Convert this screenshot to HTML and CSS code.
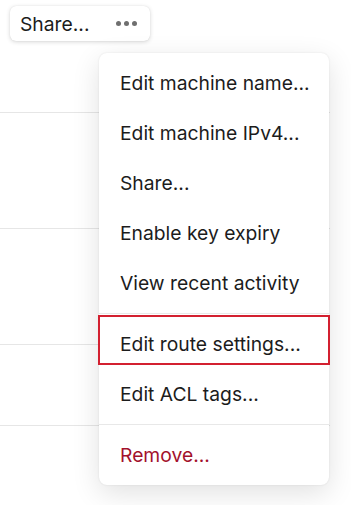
FILE: index.html
```html
<!DOCTYPE html>
<html>
<head>
<meta charset="utf-8">
<link rel="stylesheet" href="styles.css">
</head>
<body>
<div class="page">
  <div class="rows">
    <div class="row row-first">
      <div class="share-btn">
        <span class="share-label">Share...</span>
        <span class="dots"><i></i><i></i><i></i></span>
      </div>
    </div>
    <div class="row row-mid"></div>
    <div class="row row-mid"></div>
    <div class="row row-last"></div>
  </div>
  <div class="menu">
    <div class="item">Edit machine name...</div>
    <div class="item">Edit machine IPv4...</div>
    <div class="item">Share...</div>
    <div class="item">Enable key expiry</div>
    <div class="item">View recent activity</div>
    <div class="sep"></div>
    <div class="item item-marked">Edit route settings...</div>
    <div class="item">Edit ACL tags...</div>
    <div class="sep"></div>
    <div class="item item-danger">Remove...</div>
  </div>
</div>
</body>
</html>
```
FILE: styles.css
```css
html, body {
  margin: 0;
  padding: 0;
  background: #ffffff;
}
body {
  font-family: Inter, "Noto Sans", sans-serif;
  color: #1c1c1c;
  width: 351px;
  height: 505px;
  overflow: hidden;
}
.page {
  position: relative;
  width: 351px;
  height: 505px;
}
.rows {
  width: 330px;
  display: flex;
  flex-direction: column;
}
.row {
  border-bottom: 1px solid #e6e6e6;
  box-sizing: border-box;
}
.row-first {
  height: 113px;
  padding: 6px 0 0 10px;
}
.row-mid { height: 116px; }
.row-last { height: 81px; }
.share-btn {
  width: 140px;
  height: 35px;
  box-sizing: border-box;
  background: #fff;
  border-radius: 6px;
  box-shadow: 0 1px 4px rgba(0,0,0,0.16), 0 0 1px rgba(0,0,0,0.12);
  display: flex;
  align-items: center;
  padding: 0 12px 0 10px;
  justify-content: space-between;
}
.share-label {
  font-size: 19.3px;
  color: #1c1c1c;
}
.dots {
  display: flex;
  gap: 3px;
  margin-right: 1px;
}
.dots i {
  width: 5px;
  height: 5px;
  border-radius: 50%;
  background: #6f6f6f;
}
.menu {
  position: absolute;
  left: 99px;
  top: 53px;
  width: 230px;
  box-sizing: border-box;
  padding: 5px 0;
  background: #fff;
  border-radius: 8px;
  box-shadow: 0 8px 28px rgba(0,0,0,0.12), 0 0 2px rgba(0,0,0,0.1);
}
.item {
  position: relative;
  height: 50px;
  display: flex;
  align-items: center;
  padding-left: 21px;
  font-size: 19.3px;
  color: #1c1c1c;
  white-space: nowrap;
}
.item-danger { color: #a3112c; }
.item-marked::after {
  content: "";
  position: absolute;
  left: -1px;
  right: -1px;
  top: -4px;
  height: 50px;
  box-sizing: border-box;
  border: 2px solid #d32030;
}
.sep {
  height: 1px;
  margin: 5px 0;
  background: #e8e8e8;
}
```
